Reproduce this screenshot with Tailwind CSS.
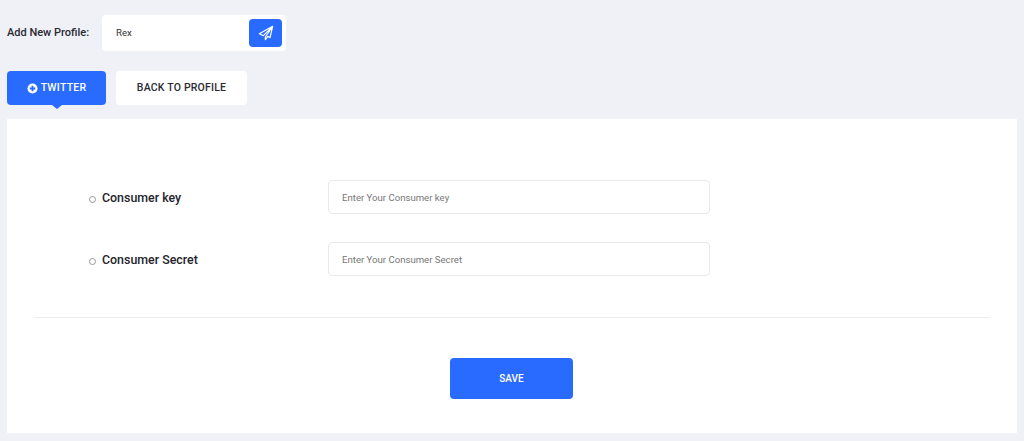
<!DOCTYPE html>
<html lang="en">
<head>
    <meta charset="UTF-8">
    <title>Add New Profile</title>
    <script src="https://cdn.jsdelivr.net/npm/@tailwindcss/browser@4"></script>
</head>
<body class="bg-[#f0f1f7] font-['Roboto',sans-serif] h-[441px] w-[1024px] overflow-hidden">
    <div class="pl-[7px] pt-[15px]">
        <div class="flex items-center h-[36px]">
            <label class="w-[95px] text-[11px] font-medium text-[#2a2a33]">Add New Profile:</label>
            <div class="w-[184px] h-[36px] bg-white rounded flex items-center justify-between pl-[14px] pr-[4px]">
                <span class="text-[9.6px] text-[#333]">Rex</span>
                <button class="w-[33px] h-[28px] bg-[#2a6bff] rounded flex items-center justify-center">
                    <svg class="w-[16px] h-[16px]" viewBox="0 0 24 24" fill="none" stroke="white" stroke-width="1.8" stroke-linejoin="round" stroke-linecap="round">
                        <path d="M22 2 2 13l6 3 14-14-11 16v4l4-5 3 2z"/>
                    </svg>
                </button>
            </div>
        </div>
        <div class="flex gap-[10px] mt-[20px]">
            <button class="relative w-[99px] h-[34px] bg-[#2a6bff] rounded-sm text-white text-[10.5px] font-medium tracking-[0.25px] flex items-center justify-center gap-[3px]">
                <svg class="w-[11px] h-[11px]" viewBox="0 0 12 12">
                    <circle cx="6" cy="6" r="5.5" fill="white"/>
                    <path d="M6 3v6M3 6h6" stroke="#2a6bff" stroke-width="2"/>
                </svg>
                TWITTER
                <span class="absolute left-1/2 -translate-x-1/2 top-full w-0 h-0 border-x-[5px] border-x-transparent border-t-[4px] border-t-[#2a6bff]"></span>
            </button>
            <button class="w-[131px] h-[34px] bg-white rounded-sm text-[#2a2a33] text-[10.5px] font-medium tracking-[0.2px]">BACK TO PROFILE</button>
        </div>
    </div>
    <div class="mt-[14px] ml-[7px] w-[1010px] h-[314px] bg-white pt-[61px]">
        <div class="flex flex-col gap-[28px]">
            <div class="flex items-center h-[34px] pl-[82px]">
                <span class="w-[7px] h-[7px] rounded-full border border-[#999] mr-[6px] mt-[4px]"></span>
                <label class="w-[226px] text-[12.4px] font-medium text-[#24242c] mt-[2px]">Consumer key</label>
                <input class="w-[382px] h-[34px] border border-[#e8e8ee] rounded px-[13px] text-[9.6px] placeholder:text-[#777]" placeholder="Enter Your Consumer key">
            </div>
            <div class="flex items-center h-[34px] pl-[82px]">
                <span class="w-[7px] h-[7px] rounded-full border border-[#999] mr-[6px] mt-[4px]"></span>
                <label class="w-[226px] text-[12.4px] font-medium text-[#24242c] mt-[2px]">Consumer Secret</label>
                <input class="w-[382px] h-[34px] border border-[#e8e8ee] rounded px-[13px] text-[9.6px] placeholder:text-[#777]" placeholder="Enter Your Consumer Secret">
            </div>
        </div>
        <div class="ml-[27px] mr-[27px] mt-[41px] border-t border-[#eeeef2]"></div>
        <div class="flex justify-center mt-[40px] pr-[1px]">
            <button class="w-[123px] h-[41px] bg-[#2a6bff] rounded text-white text-[10px] font-medium">SAVE</button>
        </div>
    </div>
</body>
</html>
